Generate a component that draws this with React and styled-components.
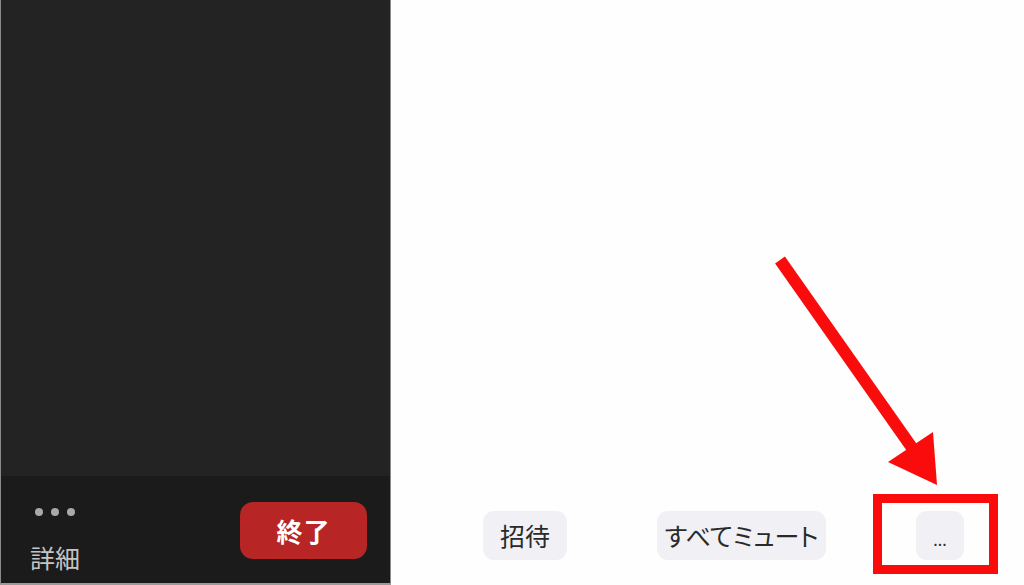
import styled, { createGlobalStyle } from 'styled-components';

const GlobalStyle = createGlobalStyle`
    html, body {
        margin: 0;
        padding: 0;
        background: #fefefe;
        font-family: "Noto Sans CJK JP", "Noto Sans", sans-serif;
    }
`;

const Screen = styled.div`
    position: relative;
    display: flex;
    width: 1024px;
    height: 585px;
    overflow: hidden;
    background: #fefefe;
`;

// Dark meeting panel on the left
const MeetingPanel = styled.div`
    flex-shrink: 0;
    display: flex;
    flex-direction: column;
    width: 389px;
    height: 583px;
    border-left: 1px solid #8a8a8a;
    border-right: 1px solid #8a8a8a;
    border-bottom: 2px solid #9a9a9a;
`;

const VideoArea = styled.div`
    flex: 1;
    background: #232323;
`;

const DarkToolbar = styled.div`
    display: flex;
    align-items: flex-start;
    justify-content: space-between;
    height: 107px;
    padding: 0 23px 0 29px;
    background: #1b1b1b;
`;

const MoreGroup = styled.div`
    display: flex;
    flex-direction: column;
    align-items: flex-start;
`;

const Dots = styled.div`
    display: flex;
    gap: 8px;
    margin: 32px 0 0 5px;
`;

const Dot = styled.span`
    width: 8px;
    height: 8px;
    border-radius: 50%;
    background: #a9a9a9;
`;

const MoreLabel = styled.span`
    margin-top: 25px;
    font-size: 25px;
    line-height: 32px;
    color: #c4c4c4;
`;

const EndButton = styled.button`
    margin-top: 26px;
    width: 127px;
    height: 57px;
    border: none;
    border-radius: 13px;
    background: #b72525;
    color: #fff;
    font-family: inherit;
    font-size: 26px;
    font-weight: 700;
    letter-spacing: 1px;
`;

// White side with the participant controls
const SidePanel = styled.div`
    flex: 1;
    min-width: 0;
    display: flex;
    flex-direction: column;
    justify-content: flex-end;
`;

const LightToolbar = styled.div`
    display: flex;
    align-items: center;
    gap: 90px;
    padding: 0 0 25px 92px;
`;

const PillButton = styled.button`
    flex-shrink: 0;
    height: 49px;
    width: ${(p) => p.$w}px;
    padding: ${(p) => (p.$square ? '6px 0 0' : '0')};
    border: none;
    border-radius: 11px;
    background: #f0f0f5;
    color: #2a2a2a;
    font-family: inherit;
    font-size: ${(p) => (p.$square ? '16px' : '25px')};
    font-feature-settings: "palt";
    line-height: 1;
`;

// Annotation overlay
const Highlight = styled.div`
    position: absolute;
    left: 873px;
    top: 494px;
    width: 107px;
    height: 62px;
    border: 9px solid #fb0c0c;
    pointer-events: none;
`;

const Arrow = styled.svg`
    position: absolute;
    left: 760px;
    top: 240px;
    pointer-events: none;
`;

export default function App() {
    return (
        <>
            <GlobalStyle />
            <Screen>
                <MeetingPanel>
                    <VideoArea />
                    <DarkToolbar>
                        <MoreGroup>
                            <Dots>
                                <Dot />
                                <Dot />
                                <Dot />
                            </Dots>
                            <MoreLabel>詳細</MoreLabel>
                        </MoreGroup>
                        <EndButton>終了</EndButton>
                    </DarkToolbar>
                </MeetingPanel>

                <SidePanel>
                    <LightToolbar>
                        <PillButton $w={84}>招待</PillButton>
                        <PillButton $w={169}>すべてミュート</PillButton>
                        <PillButton $w={48} $square>...</PillButton>
                    </LightToolbar>
                </SidePanel>

                <Highlight />
                <Arrow width="200" height="260" viewBox="0 0 200 260">
                    <line x1="20" y1="20" x2="155" y2="212" stroke="#fb0c0c" strokeWidth="12" />
                    <polygon points="177,245 128,222 173,192" fill="#fb0c0c" />
                </Arrow>
            </Screen>
        </>
    );
}
